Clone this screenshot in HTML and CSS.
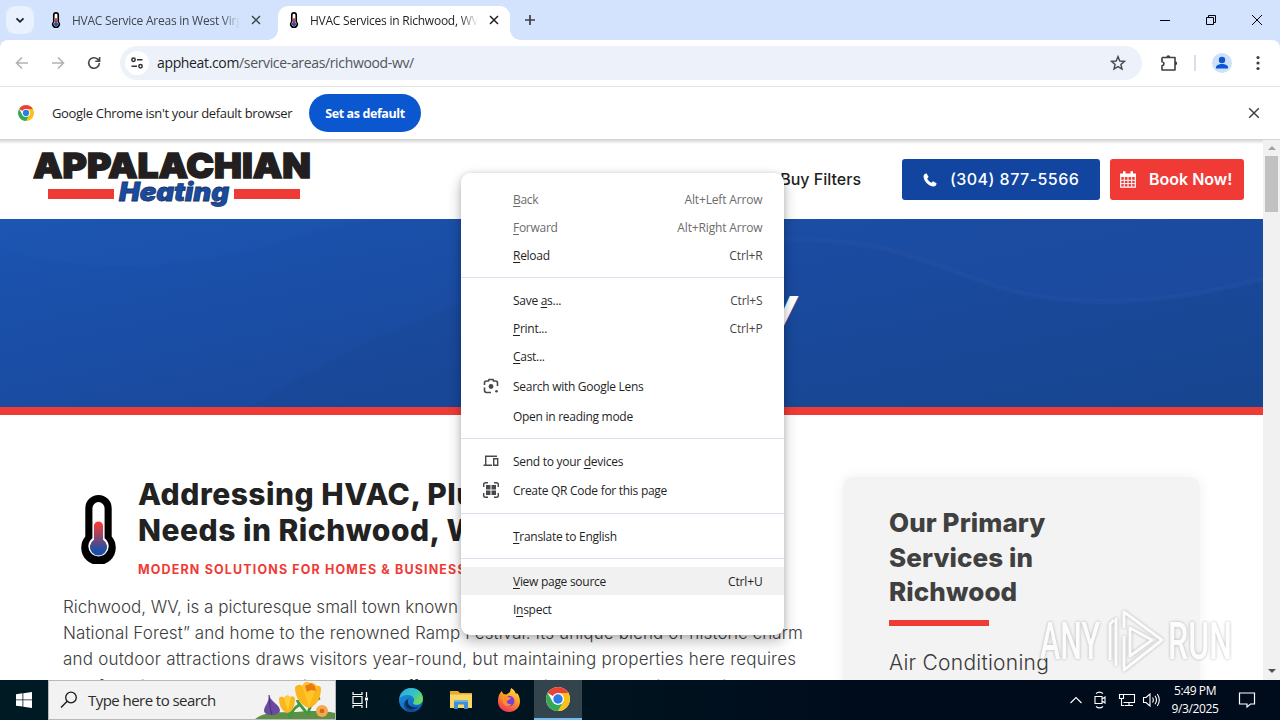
FILE: index.html
```html
<!DOCTYPE html>
<html lang="en">
<head>
  <meta charset="UTF-8" />
  <meta name="viewport" content="width=device-width, initial-scale=1.0" />
  <title>HVAC Services in Richwood, WV</title>
  <link rel="stylesheet" href="styles.css">
</head>
<body>

  <!-- Shared symbols -->
  <svg class="defs" width="0" height="0">
    <defs>
      <linearGradient id="heat" x1="0" y1="0" x2="0" y2="1">
        <stop offset="0.1" stop-color="#ef3b36" />
        <stop offset="0.85" stop-color="#1d4fa8" />
      </linearGradient>
      <linearGradient id="edge-a" x1="0" y1="0" x2="1" y2="0.6">
        <stop offset="0" stop-color="#2aa9e8" />
        <stop offset="0.6" stop-color="#35c3c4" />
        <stop offset="1" stop-color="#6fdc56" />
      </linearGradient>
      <linearGradient id="edge-b" x1="0" y1="0" x2="0.6" y2="1">
        <stop offset="0" stop-color="#1b9de2" />
        <stop offset="1" stop-color="#0f5ebd" />
      </linearGradient>
      <linearGradient id="fox" x1="0.8" y1="0" x2="0.3" y2="1">
        <stop offset="0" stop-color="#ffe14a" />
        <stop offset="0.45" stop-color="#ff9a22" />
        <stop offset="1" stop-color="#f0305c" />
      </linearGradient>
    </defs>
    <symbol id="thermo" viewBox="0 0 34 68">
      <path d="M17 0a13 13 0 0 1 13 13v28a17 17 0 1 1-26 0V13A13 13 0 0 1 17 0z" fill="#000" />
      <path d="M17 7a6 6 0 0 1 6 6v29.500a10 10 0 1 1-12 0V13a6 6 0 0 1 6-6z" fill="#fff" />
      <path d="M17 26a4.500 4.500 0 0 1 4.500 4.500v13.500a8.500 8.500 0 1 1-9 0V30.500A4.500 4.500 0 0 1 17 26z" fill="url(#heat)" />
    </symbol>
    <symbol id="chrome" viewBox="0 0 24 24">
      <circle cx="12" cy="12" r="12" fill="#fff" />
      <path d="M12 12 1.610 6A12 12 0 0 1 22.390 6H12z" fill="#ea4335" />
      <path d="M12 6H22.390A12 12 0 0 1 12 24l5.200-9z" fill="#fbc116" />
      <path d="M1.610 6A12 12 0 0 0 12 24l5.200-9L12 12 6.800 15z" fill="#34a853" />
      <circle cx="12" cy="12" r="6" fill="#fff" />
      <circle cx="12" cy="12" r="4.700" fill="#2b7de9" />
    </symbol>
    <symbol id="cross" viewBox="0 0 10 10">
      <path d="M1 1 9 9M9 1 1 9" fill="none" stroke="currentColor" />
    </symbol>
  </svg>

  <div class="browser">
    <div class="tab-strip">
      <button class="tab-search">
        <svg width="10" height="10" viewBox="0 0 10 10"><path d="M1.500 3.300 5 6.800 8.500 3.300" fill="none" stroke="#1f1f1f" stroke-width="1.800" /></svg>
      </button>
      <div class="tab">
        <svg class="favicon"><use href="#thermo" /></svg>
        <span class="tab-title">HVAC Service Areas in West Virginia</span>
        <svg class="tab-close"><use href="#cross" /></svg>
      </div>
      <div class="tab active">
        <svg class="favicon"><use href="#thermo" /></svg>
        <span class="tab-title">HVAC Services in Richwood, WV | HVAC</span>
        <svg class="tab-close"><use href="#cross" /></svg>
      </div>
      <svg class="new-tab" width="12" height="12" viewBox="0 0 12 12"><path d="M6 1v10M1 6h10" stroke="#3c4043" stroke-width="1.700" /></svg>
      <div class="window-buttons">
        <svg width="12" height="12" viewBox="0 0 12 12"><path d="M1 6.500h10" stroke="#000" /></svg>
        <svg width="12" height="12" viewBox="0 0 12 12"><path d="M1.500 3.500h7v7h-7zM3.500 3V1.500h7v7H9" fill="none" stroke="#000" /></svg>
        <svg width="12" height="12" viewBox="0 0 12 12"><path d="M1 1 11 11M11 1 1 11" stroke="#000" /></svg>
      </div>
    </div>

    <div class="toolbar">
      <svg class="nav-icon off" viewBox="0 0 16 16"><path d="M14 8H2.500M8 2.500 2.500 8 8 13.500" /></svg>
      <svg class="nav-icon off" viewBox="0 0 16 16"><path d="M2 8h11.500M8 2.500 13.500 8 8 13.500" /></svg>
      <svg class="nav-icon" viewBox="0 0 16 16"><path d="M13.300 8A5.300 5.300 0 1 1 11.600 4.100L13.600 6M13.600 2v4.300H9.300" /></svg>
      <div class="omnibox">
        <div class="site-info">
          <svg width="14" height="14" viewBox="0 0 14 14" fill="none" stroke="#303134" stroke-width="1.500"><circle cx="3.500" cy="3.800" r="1.700" /><path d="M7 3.800h5.500M1.500 10.200H7" /><circle cx="10.500" cy="10.200" r="1.700" /></svg>
        </div>
        <span class="url"><b>appheat.com</b>/service-areas/richwood-wv/</span>
        <svg class="star" width="16" height="16" viewBox="0 0 16 16"><path d="M8 1.600 9.800 6l4.700.4-3.600 3.100 1.100 4.600L8 11.600l-4 2.500 1.100-4.600L1.500 6.400 6.200 6z" fill="none" stroke="#46484b" stroke-width="1.400" /></svg>
      </div>
      <svg class="puzzle" width="18" height="18" viewBox="0 0 18 18"><path d="M2 3.500h13v4.200M15 11v5H2v-4.300c2.600-.3 2.600-3.600 0-3.900V3.500M15 11v-3.300" fill="none" stroke="#3c4043" stroke-width="1.600" stroke-linejoin="round" /><path d="M6.300 3.500a2 2.200 0 0 1 4 0zM15 7.300a2.200 2 0 0 1 0 4z" fill="#3c4043" /></svg>
      <span class="divider"></span>
      <svg class="profile" width="20" height="20" viewBox="0 0 20 20"><circle cx="10" cy="10" r="10" fill="#cfe0fc" /><circle cx="10" cy="7" r="3.200" fill="#0b57d0" /><path d="M4 15.500v-1.200c0-2 3-3.300 6-3.300s6 1.300 6 3.300v1.200z" fill="#0b57d0" /></svg>
      <svg class="dots" width="4" height="16" viewBox="0 0 4 16" fill="#3c4043"><circle cx="2" cy="2.500" r="1.600" /><circle cx="2" cy="8" r="1.600" /><circle cx="2" cy="13.500" r="1.600" /></svg>
    </div>

    <div class="infobar">
      <svg class="info-logo"><use href="#chrome" /></svg>
      <span class="info-text">Google Chrome isn't your default browser</span>
      <button class="set-default">Set as default</button>
      <svg class="info-close"><use href="#cross" /></svg>
    </div>
  </div>

  <div class="viewport">
    <div class="site">
      <header class="site-header">
        <svg class="logo" width="280" height="58" viewBox="0 0 280 58">
          <text class="logo-name" x="0" y="27.500" textLength="278" lengthAdjust="spacingAndGlyphs">APPALACHIAN</text>
          <path d="M15 39h66v10H15zM201 39h66v10h-66z" fill="#ef3b36" />
          <text class="logo-sub" x="86" y="51" textLength="110" lengthAdjust="spacingAndGlyphs">Heating</text>
        </svg>
        <nav class="site-nav">
          <a class="nav-link">Buy Filters</a>
          <a class="btn call">
            <svg width="14" height="14" viewBox="0 0 14 14"><path d="M3.600.500 5.600 4 4.200 5.500c.9 2 2.300 3.400 4.200 4.300L10 8.300l3.500 2c.2 1.700-1.200 3.200-2.900 3.200C5.500 13 1 8.600.500 3.500.400 1.900 1.900.300 3.600.500z" fill="#fff" /></svg>
            <span>(304) 877-5566</span>
          </a>
          <a class="btn book">
            <svg width="16" height="17" viewBox="0 0 16 17"><path d="M.7 3.200h14.600v13H.7z" fill="none" stroke="#fff" stroke-width="1.200" /><path d="M.7 3h14.600v3H.7zM3 .300h2.500v4H3zM10.500.300H13v4h-2.500z" fill="#fff" /><path d="M4.300 6v10M8 6v10M11.700 6v10M1 9.300h14M1 12.600h14" stroke="#fff" /></svg>
            <span>Book Now!</span>
          </a>
        </nav>
      </header>

      <section class="hero">
        <svg class="waves" viewBox="0 0 1263 188" preserveAspectRatio="none">
          <path d="M0 28C90 60 200 48 290 20S400 2 461 0H0z" fill="#2159b6" opacity="0.300" />
          <path d="M250 188C320 145 390 110 461 85v103z" fill="#17438c" opacity="0.250" />
          <path d="M784 20C880 20 920 40 980 62S1130 95 1263 60V0H784z" fill="#204fa8" opacity="0.350" />
          <path d="M784 20C880 20 920 40 980 62S1130 95 1263 60" fill="none" stroke="#2854a6" stroke-width="5" opacity="0.350" />
        </svg>
        <h1>Richwood, WV</h1>
      </section>

      <main class="content">
        <article class="intro">
          <div class="intro-head">
            <svg class="intro-icon"><use href="#thermo" /></svg>
            <div>
              <h2>Addressing HVAC, Plumbing<br>Needs in Richwood, WV</h2>
              <p class="kicker">Modern solutions for homes &amp; businesses</p>
            </div>
          </div>
          <p class="line l1">Richwood, WV, is a picturesque small town known</p>
          <p class="line l2">National Forest” and home to the renowned Ramp Festival. Its unique blend of historic charm</p>
          <p class="line l3">and outdoor attractions draws visitors year-round, but maintaining properties here requires</p>
          <p class="line l4">carefully timed care. Appalachian Heating offers reliable heating and plumbing, sealing and</p>
        </article>
        <aside class="services">
          <h3>Our Primary<br>Services in<br>Richwood</h3>
          <a class="service">Air Conditioning</a>
        </aside>
      </main>
    </div>
    <div class="scrollbar">
      <span class="arrow up"></span>
      <span class="thumb"></span>
      <span class="arrow down"></span>
    </div>
  </div>

  <footer class="taskbar">
    <div class="start">
      <svg width="16" height="16" viewBox="0 0 16 16"><path d="M0 2.300 6.500 1.300v6.200H0zM7.300 1.200 16 0v7.500H7.300zM0 8.300h6.500v6.300L0 13.700zM7.300 8.300H16V16l-8.700-1.200z" fill="#fff" /></svg>
    </div>
    <div class="search">
      <svg width="18" height="18" viewBox="0 0 18 18"><circle cx="11" cy="6.500" r="5.300" fill="none" stroke="#1b1b1b" stroke-width="1.300" /><path d="M7.200 10.300 1 16.500" stroke="#1b1b1b" stroke-width="1.400" /></svg>
      <span>Type here to search</span>
      <svg class="flowers" width="80" height="38" viewBox="0 0 80 38">
        <path d="M0 38c12-9 28-6 40-7s28-2 40 1v6z" fill="#5d8f45" />
        <path d="M35 37C34 28 33 26 29 22M35 37c1-6 4-10 9-13M52 33c-3-6-8-9-10-14M53 34c1-8 4-14 12-17" fill="none" stroke="#3f9a3d" stroke-width="2.800" />
        <path d="M14 14c2 7 10 9 11 15 0 6-15 7-16 1 0-5 5-8 5-16z" fill="#6a4a9e" />
        <path d="M14 14c1 8 1 15 3 20" stroke="#46307a" fill="none" />
        <path d="M24 17q3-3 5 0 3-5 6-1 3-2 5 1c0 8-2 14-8 15-5-2-8-7-8-15z" fill="#fbb61e" />
        <path d="M29 17l4 13 3-14q-4-3-7 1z" fill="#ffcf3a" />
        <path d="M40 6q4-4 7-1 3-6 8-3 4-1 6 3 4-1 5 2c0 11-5 18-12 20-9-3-14-11-14-21z" fill="#fcb51a" />
        <path d="M47 5l7 21 8-21q-2-3-7-3-5-1-8 3z" fill="#ffc62c" />
        <path d="M50 5l2 6 4-2 5 1-1-5-4-3z" fill="#e87a16" />
        <circle cx="67" cy="30" r="6" fill="#f6a84e" />
        <circle cx="67" cy="30" r="2.300" fill="#d8651c" />
      </svg>
    </div>
    <div class="task view">
      <svg width="18" height="18" viewBox="0 0 18 18" fill="none" stroke="#fff" stroke-width="1.200"><path d="M2 5.500h9v7H2zM2 1v2.500h9V1M2 17v-2.500h9V17M15.500 1v5M15.500 10v7" /><path d="M14 6.500h3v3h-3z" fill="#fff" stroke="none" /></svg>
    </div>
    <div class="task edge">
      <svg width="24" height="24" viewBox="0 0 24 24"><circle cx="12" cy="12" r="12" fill="url(#edge-b)" /><path d="M.500 10C2 4 6.500 0 12 0c7 0 12 5 12 10.500 0 4-3 6.300-6.300 6.300-2.200 0-3.700-1-3.700-1.800 0-.6 1-1.200 1-3 0-2.700-2.600-5-6.200-5C5 7 2 8.500.500 10z" fill="url(#edge-a)" /><path d="M9 12c-2 3.500 0 8.500 5 9.700 3.500.8 6.500-.2 8.200-2.200C20 22.500 16 24.300 12 24 7 23.500 4.500 19 5 15.500 5.400 13 7 11.500 9 12z" fill="#114a8b" /><path d="M10 10.500c-1.600 1.500-1.600 4.500 0 6.500 2.500 2.600 7 3 10 1.800-4 3-8.500 3.300-12 .7-2.600-3-1.600-7.500 2-9z" fill="#092d52" /></svg>
    </div>
    <div class="task files">
      <svg width="22" height="20" viewBox="0 0 22 20"><path d="M0 1h8l2 2h12v15H0z" fill="#e9a92b" /><path d="M0 4.500h22V18H0z" fill="#fbd566" /><path d="M4 19v-8.500h14V19h-4v-4.500H8V19z" fill="#3a92d4" /><path d="M4 10.500h14V12H4z" fill="#67b4ea" /></svg>
    </div>
    <div class="task">
      <svg width="24" height="24" viewBox="0 0 24 24"><path d="M2 7 4.500 3l2 3 3 .5L13 4l1-4c3 1.500 4.500 4 5 6l1-1c2 2 3 5.500 3 8.500C23 19.500 18 24 12 24S1 19.500 1 13.500C1 11 1.400 9 2 7z" fill="url(#fox)" /><circle cx="12.200" cy="13" r="5.300" fill="#7a3ee0" /><path d="M4 9c3-2 6-1.500 7.500 0L14 10c-1 2-3 1.500-4 3s1 4 4.500 3c-2 3.500-8 2.500-8.500-2C5.800 12 4 11 4 9z" fill="#ff9028" /></svg>
    </div>
    <div class="task current">
      <svg width="24" height="24"><use href="#chrome" /></svg>
    </div>
    <div class="tray">
      <svg width="14" height="8" viewBox="0 0 14 8"><path d="M1.500 7 7 1.500 12.500 7" /></svg>
      <svg width="14" height="18" viewBox="0 0 14 18"><path d="M2 5.500h7v7H2zM9 8l3-2v6L9 10M3 2.500c2-1.600 5-1.600 7 0M3 15.500c2 1.600 5 1.600 7 0" /></svg>
      <svg width="18" height="16" viewBox="0 0 18 16"><path d="M5.500 2.500h11v8h-11M11 10.500v3M7 13.500h8M1.500 2.500h4v4h-4zM3.500 6.500v7h3" /></svg>
      <svg width="18" height="16" viewBox="0 0 18 16"><path d="M1.500 5.500h2.500l4-3.500v12l-4-3.500H1.500zM10.500 5.500q1.700 2.500 0 5M13 3.800q3 4.200 0 8.400M15.300 2q4 6 0 12" /></svg>
    </div>
    <div class="clock"><span>5:49 PM</span><span>9/3/2025</span></div>
    <svg class="notify" width="18" height="18" viewBox="0 0 18 18"><path d="M1.500 2h15v11h-4L9 16v-3H1.500z" fill="none" stroke="#fff" stroke-width="1.200" /></svg>
  </footer>

  <div class="context-menu">
    <div class="item disabled"><span><u>B</u>ack</span><kbd>Alt+Left Arrow</kbd></div>
    <div class="item disabled"><span><u>F</u>orward</span><kbd>Alt+Right Arrow</kbd></div>
    <div class="item"><span><u>R</u>eload</span><kbd>Ctrl+R</kbd></div>
    <hr>
    <div class="item"><span>Save <u>a</u>s...</span><kbd>Ctrl+S</kbd></div>
    <div class="item"><span><u>P</u>rint...</span><kbd>Ctrl+P</kbd></div>
    <div class="item"><span><u>C</u>ast...</span></div>
    <div class="item lens">
      <svg width="16" height="16" viewBox="0 0 16 16" fill="none" stroke="#46484b" stroke-width="1.600"><path d="M1.500 7V5q0-2 2-2h2l.5-1.500h4L10.500 3h2q2 0 2 2v3M1.500 9.500V12q0 2.500 2 2.500H8" /><circle cx="8" cy="8.500" r="2.400" fill="#46484b" stroke="none" /><circle cx="13.500" cy="13.300" r="1.300" fill="#46484b" stroke="none" /></svg>
      <span>Search with Google Lens</span>
    </div>
    <div class="item"><span>Open in reading mode</span></div>
    <hr>
    <div class="item send">
      <svg width="16" height="16" viewBox="0 0 16 16" fill="none" stroke="#46484b" stroke-width="1.400"><path d="M14 3.200H2.700v8.300M.500 12.200H9" /><path d="M10.700 5.700h4v6.500h-4z" /></svg>
      <span>Send to your <u>d</u>evices</span>
    </div>
    <div class="item qr">
      <svg width="18" height="18" viewBox="0 0 18 18"><path d="M1.700 6V3.500q0-1.800 1.800-1.800H6M12 1.700h2.500q1.800 0 1.800 1.800V6M16.300 12v2.500q0 1.800-1.800 1.800H12M6 16.300H3.500q-1.800 0-1.800-1.800V12" fill="none" stroke="#46484b" stroke-width="1.400" /><path d="M4 4h4.500v4.500H4zM9.500 4H14v4.500H9.500zM4 9.500h4.500V14H4zM9.500 9.500H14V14H9.500z" fill="#46484b" /></svg>
      <span>Create QR Code for this page</span>
    </div>
    <hr>
    <div class="item"><span><u>T</u>ranslate to English</span></div>
    <hr>
    <div class="item hover"><span><u>V</u>iew page source</span><kbd>Ctrl+U</kbd></div>
    <div class="item"><span>I<u>n</u>spect</span></div>
  </div>

  <svg class="watermark" width="200" height="70" viewBox="0 0 200 70">
    <text x="4" y="51" textLength="60" lengthAdjust="spacingAndGlyphs">ANY</text>
    <text x="132" y="51" textLength="64" lengthAdjust="spacingAndGlyphs">RUN</text>
    <path d="M74 52V16l4-4M80 58V10M88 20V4l38 28-38 30V28M94 20v28l22-16z" />
  </svg>

</body>
</html>
```

FILE: styles.css
```css
* {
  box-sizing: border-box;
}

body {
  margin: 0;
  width: 1280px;
  height: 720px;
  overflow: hidden;
  display: flex;
  flex-direction: column;
  background: #fff;
  font-family: "Open Sans", "Noto Sans", sans-serif;
  font-size: 12px;
  color: #1f1f1f;
}

svg {
  display: block;
  flex: none;
}

button {
  border: 0;
  padding: 0;
  font-family: inherit;
}

.defs {
  position: absolute;
}

/* Tab strip */
.browser {
  background: #d3e3fd;
}

.tab-strip {
  display: flex;
  align-items: center;
  height: 40px;
  padding-left: 6px;
}

.tab-search {
  display: flex;
  align-items: center;
  justify-content: center;
  width: 28px;
  height: 28px;
  border-radius: 9px;
  background: #e9f0fe;
}

.tab {
  position: relative;
  display: flex;
  align-items: center;
  align-self: flex-end;
  width: 238px;
  height: 34px;
  padding: 0 11px 6px 14px;
  color: #41464d;
}

.tab.active {
  width: 232px;
  margin-left: 6px;
  padding-left: 8px;
  border-radius: 10px 10px 0 0;
  background: #fff;
  color: #1f1f1f;
}

/* Flared feet of the active tab */
.tab.active::before,
.tab.active::after {
  content: "";
  position: absolute;
  bottom: 0;
  width: 10px;
  height: 10px;
}

.tab.active::before {
  left: -10px;
  background: radial-gradient(circle at 0 0, transparent 9.5px, #fff 10px);
}

.tab.active::after {
  right: -10px;
  background: radial-gradient(circle at 100% 0, transparent 9.5px, #fff 10px);
}

.favicon {
  width: 16px;
  height: 16px;
  margin-right: 8px;
}

.tab-title {
  flex: none;
  width: 168px;
  margin-right: 11px;
  overflow: hidden;
  white-space: nowrap;
  letter-spacing: -0.24px;
  -webkit-mask-image: linear-gradient(90deg, #000 150px, transparent);
  mask-image: linear-gradient(90deg, #000 150px, transparent);
}

.tab-close {
  width: 10px;
  height: 10px;
  stroke-width: 1.5;
}

.new-tab {
  margin-left: 14px;
}

.window-buttons {
  display: flex;
  gap: 34px;
  margin-left: auto;
  padding-right: 17px;
}

/* Toolbar */
.toolbar {
  display: flex;
  align-items: center;
  height: 47px;
  padding: 0 20px 1px 14px;
  border-bottom: 1px solid #e1e3e6;
  border-radius: 8px 8px 0 0;
  background: #fff;
}

.nav-icon {
  width: 16px;
  height: 16px;
  margin-right: 20px;
  fill: none;
  stroke: #46484b;
  stroke-width: 1.6;
}

.nav-icon.off {
  stroke: #b0b2b4;
}

.omnibox {
  display: flex;
  align-items: center;
  width: 1022px;
  height: 34px;
  margin-left: -2px;
  padding: 0 16px 0 5px;
  border-radius: 17px;
  background: #edf1fa;
}

.site-info {
  display: flex;
  align-items: center;
  justify-content: center;
  width: 24px;
  height: 24px;
  border-radius: 50%;
  background: #fff;
}

.url {
  flex: 1;
  margin-left: 8px;
  font-size: 14px;
  letter-spacing: -0.35px;
  color: #51555a;
}

.url b {
  font-weight: 400;
  color: #1f1f1f;
}

.puzzle {
  margin-left: 18px;
}

.divider {
  width: 2px;
  height: 16px;
  margin: 0 16px;
  background: #d5dff0;
}

.dots {
  margin-left: auto;
}

/* Default browser prompt */
.infobar {
  display: flex;
  align-items: center;
  height: 53px;
  padding: 0 20px 0 18px;
  border-bottom: 1px solid #d5d5d5;
  background: #fff;
  font-size: 13px;
}

.info-logo {
  width: 16px;
  height: 16px;
}

.info-text {
  width: 241px;
  margin: 0 16px 0 18px;
  white-space: nowrap;
  letter-spacing: -0.33px;
}

.set-default {
  width: 112px;
  height: 38px;
  border-radius: 19px;
  background: #0b57d0;
  color: #fff;
  font-size: 12.500px;
  font-weight: 700;
  letter-spacing: -0.4px;
}

.info-close {
  width: 12px;
  height: 12px;
  margin-left: auto;
  stroke-width: 1.2;
  color: #3c4043;
}

/* Page */
.viewport {
  display: flex;
  height: 540px;
  overflow: hidden;
  font-family: Inter, "Open Sans", sans-serif;
}

.site {
  width: 1263px;
  overflow: hidden;
}

.site-header {
  display: flex;
  align-items: flex-start;
  justify-content: space-between;
  height: 79px;
  padding: 10px 19px 0 33px;
  background: linear-gradient(#d8d8d8, #fff 4px);
}

.logo-name {
  font-size: 34.500px;
  font-weight: 900;
  fill: #231f20;
  stroke: #231f20;
  stroke-width: 1.4;
}

.logo-sub {
  font-size: 25.500px;
  font-weight: 900;
  font-style: italic;
  fill: #1b4b9f;
  stroke: #17356d;
  stroke-width: 0.8;
}

.site-nav {
  display: flex;
  align-items: center;
  margin-top: 9px;
  font-size: 16px;
  font-weight: 500;
}

.nav-link {
  margin-right: 41px;
}

.nav-link,
.btn span {
  padding-bottom: 1px;
}

.btn {
  display: flex;
  align-items: center;
  height: 41px;
  border-radius: 3px;
  color: #fff;
}

.call {
  width: 198px;
  margin-right: 10px;
  padding-left: 21px;
  gap: 13px;
  background: #11459f;
  letter-spacing: 0.45px;
}

.book {
  width: 134px;
  padding-left: 10px;
  gap: 13px;
  background: #f03a36;
  font-weight: 600;
}

.hero {
  position: relative;
  height: 196px;
  border-bottom: 8px solid #ef3b36;
  background: linear-gradient(168deg, #1b54b1, #1a4a9f 50%, #17458f);
}

.waves {
  position: absolute;
  inset: 0;
  width: 100%;
  height: 100%;
}

.hero h1 {
  position: relative;
  margin: 0;
  padding-top: 67px;
  text-align: center;
  font-size: 45px;
  line-height: 54px;
  font-style: italic;
  font-weight: 800;
  letter-spacing: 0.2px;
  color: #fff;
}

.content {
  display: flex;
  align-items: flex-start;
  justify-content: space-between;
  padding: 62px 63px 0;
}

.intro {
  width: 745px;
}

.intro-head {
  display: flex;
  gap: 22px;
  height: 117px;
  padding-left: 18px;
}

.intro-icon {
  width: 35px;
  height: 69px;
  margin-top: 18px;
}

.intro h2 {
  margin: -1px 0 0;
  font-size: 30px;
  line-height: 36px;
  font-weight: 800;
  letter-spacing: 0.5px;
  white-space: nowrap;
  color: #222;
}

.kicker {
  margin: 14px 0 0;
  font-size: 12.500px;
  line-height: 16px;
  font-weight: 700;
  letter-spacing: 1.15px;
  text-transform: uppercase;
  white-space: nowrap;
  color: #ef3b36;
}

.line {
  margin: 0;
  font-size: 17px;
  line-height: 26px;
  font-weight: 300;
  white-space: nowrap;
  color: #3c3c3c;
}

.l2 {
  letter-spacing: 0.1px;
}

.l3 {
  letter-spacing: 0.21px;
}

.l4 {
  margin-top: 2px;
}

.services {
  width: 357px;
  height: 300px;
  padding: 29px 40px 29px 46px;
  border-radius: 10px;
  background: #f3f3f3;
  box-shadow: 0 0 14px rgba(0, 0, 0, 0.06);
}

.services h3 {
  margin: 0 0 24px;
  font-size: 26px;
  line-height: 34.500px;
  font-weight: 800;
  letter-spacing: 0.1px;
  color: #404040;
}

.services h3::after {
  content: "";
  display: block;
  width: 100px;
  height: 6px;
  margin-top: 10px;
  background: #ef3b36;
}

.service {
  font-size: 21px;
  font-weight: 300;
  letter-spacing: 0.25px;
  color: #3a3a3a;
}

/* Scrollbar */
.scrollbar {
  display: flex;
  flex-direction: column;
  align-items: center;
  width: 17px;
  background: #f1f1f1;
}

.thumb {
  width: 13px;
  height: 56px;
  margin-top: 4px;
  background: #c1c1c1;
}

.arrow {
  border: 4px solid transparent;
}

.arrow.up {
  margin-top: 2px;
  margin-bottom: 2px;
  border-bottom-color: #a3a3a3;
}

.arrow.down {
  margin-top: auto;
  margin-bottom: 3px;
  border-top-color: #505050;
}

/* Taskbar */
.taskbar {
  display: flex;
  align-items: center;
  height: 40px;
  background: linear-gradient(90deg, #001a24, #00141f 45%, #000b1c 70%);
}

.start {
  display: flex;
  justify-content: center;
  width: 48px;
}

.search {
  display: flex;
  align-items: center;
  width: 288px;
  height: 40px;
  padding-left: 11px;
  border: 1px solid #b5b9ba;
  background: #f2f2f2;
  font-size: 15px;
  color: #2b2b2b;
}

.search span {
  margin-left: 10px;
  letter-spacing: -0.55px;
}

.flowers {
  margin-left: auto;
}

.task {
  display: flex;
  align-items: center;
  justify-content: center;
  width: 50px;
  height: 40px;
}

.task.view {
  width: 48px;
}

.task.edge {
  width: 53px;
}

.task.files {
  width: 47px;
}

.task.current {
  width: 48px;
  border-bottom: 2px solid #76b9ed;
  background: #33444d;
}

.tray {
  display: flex;
  align-items: center;
  gap: 10px;
  margin-left: auto;
}

.tray svg {
  fill: none;
  stroke: #fff;
  stroke-width: 1.1;
}

.tray svg:first-child {
  margin-left: 3px;
}

.tray svg:nth-child(3) {
  margin-left: 1px;
}

.tray svg:last-child {
  margin-left: -4px;
}

.clock {
  display: flex;
  flex-direction: column;
  align-items: center;
  width: 70px;
  line-height: 18px;
  letter-spacing: -0.4px;
  color: #fff;
}

.notify {
  margin-left: 8px;
  margin-right: 24px;
}

/* Context menu */
.context-menu {
  position: absolute;
  left: 461px;
  top: 173px;
  width: 323px;
  height: 462px;
  padding: 12px 0;
  border-radius: 9px;
  background: #fff;
  box-shadow: 0 6px 14px rgba(0, 0, 0, 0.28), 0 0 5px rgba(0, 0, 0, 0.12);
}

.item {
  position: relative;
  display: flex;
  align-items: center;
  justify-content: space-between;
  height: 28px;
  padding: 1px 21.500px 0 52px;
  letter-spacing: -0.28px;
}

.item svg {
  position: absolute;
  left: 30px;
  transform: translateX(-50%);
  margin-top: -1px;
}

.item kbd {
  font-family: inherit;
  letter-spacing: -0.15px;
  color: #474747;
}

.item u {
  text-underline-offset: 2px;
}

.item.disabled,
.item.disabled kbd {
  color: #6c6c6c;
}

.item.lens {
  height: 32px;
}

.item.send {
  height: 28px;
}

.item.qr {
  height: 30px;
}

.item.hover {
  background: #f1f1f1;
}

.item.hover kbd {
  color: #1f1f1f;
}

.context-menu hr {
  height: 1px;
  margin: 8px 0;
  border: 0;
  background: #dcdff0;
}

/* Recording watermark */
.watermark {
  position: absolute;
  left: 1036px;
  top: 608px;
  fill: none;
  stroke: #fff;
  stroke-width: 3;
  stroke-linejoin: round;
  filter: drop-shadow(0 0 1.5px rgba(0, 0, 0, 0.35));
  opacity: 0.8;
}

.watermark text {
  font-family: Roboto, sans-serif;
  font-size: 52px;
  font-weight: 500;
  fill: #fff;
  stroke: none;
}
```
